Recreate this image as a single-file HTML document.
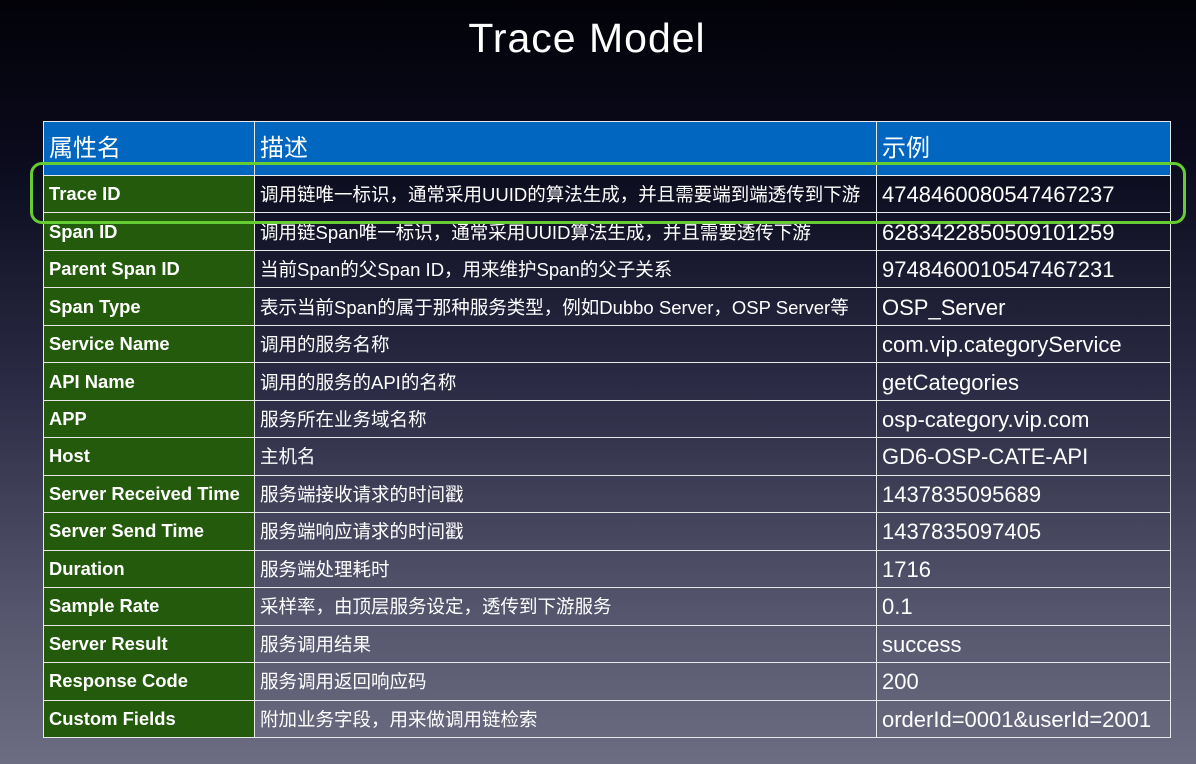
<!DOCTYPE html>
<html><head><meta charset="utf-8"><style>
html,body{margin:0;padding:0}
body{width:1196px;height:764px;overflow:hidden;position:relative;
background:linear-gradient(180deg,#020208 0%,#0a0a1c 20%,#2a2a44 50%,#55556d 80%,#6c6c82 100%);
font-family:"Liberation Sans","Noto Sans CJK SC",sans-serif;color:#fff}
h1{position:absolute;top:15px;left:0;width:1174px;text-align:center;margin:0;font-weight:normal;font-size:41px;letter-spacing:1px}
.t{position:absolute;left:43px;top:121px;width:1127px;height:616px;display:grid;
grid-template-columns:211px 622px 1fr;grid-template-rows:54px repeat(15,1fr);
border-right:1px solid #e8e8e8;border-bottom:1px solid #e8e8e8}
.t div{border-left:1px solid #e8e8e8;border-top:1px solid #e8e8e8;padding-left:5px;white-space:nowrap;overflow:hidden;display:flex;align-items:center;box-sizing:border-box}
.a{background:#245a0c;font-weight:bold;font-size:18.4px}
.b{font-size:18.5px}
.c{font-size:22px;padding-top:2px}
.t .h{background:#0066c0;font-size:24px;font-weight:normal;align-items:flex-end;padding-bottom:12px}
.hl{position:absolute;left:30px;top:162px;width:1150px;height:56px;border:3px solid #66cc33;border-radius:12px}
</style></head><body>
<h1>Trace Model</h1>
<div class="t">
<div class="h">属性名</div><div class="h">描述</div><div class="h">示例</div>
<div class="a">Trace ID</div><div class="b">调用链唯一标识，通常采用UUID的算法生成，并且需要端到端透传到下游</div><div class="c">4748460080547467237</div>
<div class="a">Span ID</div><div class="b">调用链Span唯一标识，通常采用UUID算法生成，并且需要透传下游</div><div class="c">6283422850509101259</div>
<div class="a">Parent Span ID</div><div class="b">当前Span的父Span ID，用来维护Span的父子关系</div><div class="c">9748460010547467231</div>
<div class="a">Span Type</div><div class="b">表示当前Span的属于那种服务类型，例如Dubbo Server，OSP Server等</div><div class="c">OSP_Server</div>
<div class="a">Service Name</div><div class="b">调用的服务名称</div><div class="c">com.vip.categoryService</div>
<div class="a">API Name</div><div class="b">调用的服务的API的名称</div><div class="c">getCategories</div>
<div class="a">APP</div><div class="b">服务所在业务域名称</div><div class="c">osp-category.vip.com</div>
<div class="a">Host</div><div class="b">主机名</div><div class="c">GD6-OSP-CATE-API</div>
<div class="a">Server Received Time</div><div class="b">服务端接收请求的时间戳</div><div class="c">1437835095689</div>
<div class="a">Server Send Time</div><div class="b">服务端响应请求的时间戳</div><div class="c">1437835097405</div>
<div class="a">Duration</div><div class="b">服务端处理耗时</div><div class="c">1716</div>
<div class="a">Sample Rate</div><div class="b">采样率，由顶层服务设定，透传到下游服务</div><div class="c">0.1</div>
<div class="a">Server Result</div><div class="b">服务调用结果</div><div class="c">success</div>
<div class="a">Response Code</div><div class="b">服务调用返回响应码</div><div class="c">200</div>
<div class="a">Custom Fields</div><div class="b">附加业务字段，用来做调用链检索</div><div class="c">orderId=0001&amp;userId=2001</div>
</div>
<div class="hl"></div>
</body></html>
